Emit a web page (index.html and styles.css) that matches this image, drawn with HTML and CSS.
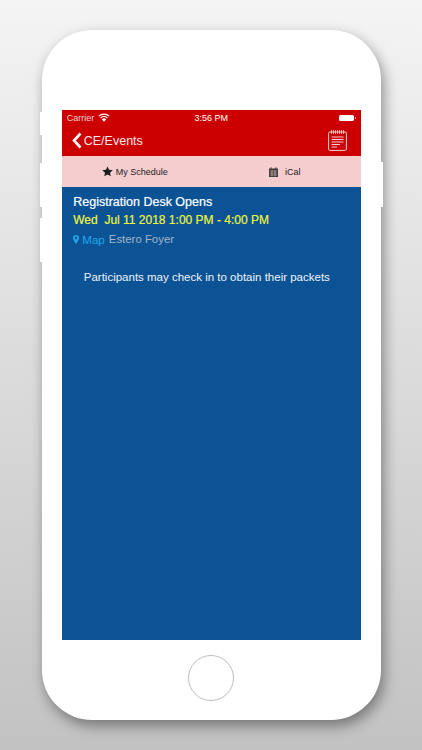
FILE: index.html

```html
<!DOCTYPE html>
<html lang="en">
<head>
    <meta charset="UTF-8">
    <meta name="viewport" content="width=device-width, initial-scale=1.0">
    <title>CE/Events</title>
    <link rel="stylesheet" href="styles.css">
</head>
<body>
    <div class="phone">
        <span class="side-btn mute"></span>
        <span class="side-btn vol-up"></span>
        <span class="side-btn vol-down"></span>
        <span class="side-btn power"></span>

        <div class="screen">
            <div class="header">
                <div class="status-bar">
                    <div class="carrier">
                        Carrier
                        <svg class="wifi" width="12" height="9" viewBox="0 0 12 9">
                            <path d="M6 8.8 L3.9 6.4 A3 3 0 0 1 8.1 6.4 Z" fill="#fff"/>
                            <path d="M2.7 5 A4.8 4.8 0 0 1 9.3 5" fill="none" stroke="#fff" stroke-width="1.2"/>
                            <path d="M0.8 3.1 A7.6 7.6 0 0 1 11.2 3.1" fill="none" stroke="#fff" stroke-width="1.2"/>
                        </svg>
                    </div>
                    <div class="clock">3:56 PM</div>
                    <div class="battery"><span class="battery-fill"></span><span class="battery-nub"></span></div>
                </div>
                <div class="nav-bar">
                    <div class="back">
                        <svg width="10" height="17" viewBox="0 0 10 17">
                            <path d="M8.5 1.5 L2 8.5 L8.5 15.5" fill="none" stroke="#fff" stroke-width="2.6"/>
                        </svg>
                        CE/Events
                    </div>
                    <svg class="notepad" width="19" height="22" viewBox="0 0 19 22">
                        <rect x="0.6" y="3" width="17.8" height="18.4" rx="1.2" fill="none" stroke="#f6cfcf" stroke-width="1"/>
                        <path d="M3.5 1V5M5.5 1V5M7.5 1V5M9.5 1V5M11.5 1V5M13.5 1V5M15.5 1V5" stroke="#f6cfcf" stroke-width="0.8"/>
                        <path d="M3.5 8H15.5M3.5 10.5H15.5M3.5 13H15.5M3.5 15.5H12M3.5 18H9" stroke="#f6cfcf" stroke-width="1"/>
                    </svg>
                </div>
            </div>

            <div class="toolbar">
                <div class="tool tool-schedule">
                    <svg width="11" height="11" viewBox="0 0 24 24"><path d="M12 1 L15.4 8.2 L23.4 9.2 L17.5 14.6 L19.1 22.5 L12 18.6 L4.9 22.5 L6.5 14.6 L0.6 9.2 L8.6 8.2 Z" fill="#1c1c1c"/></svg>
                    My Schedule
                </div>
                <div class="tool tool-ical">
                    <svg class="cal" width="9" height="10" viewBox="0 0 9 10">
                        <path d="M0 1.5H9V10H0Z" fill="#3a3a3a"/>
                        <path d="M2 0.3V2M7 0.3V2" stroke="#3a3a3a" stroke-width="1"/>
                        <path d="M0.8 4H8.2M0.8 6H8.2M0.8 8H8.2M3 3.4V9.4M6 3.4V9.4" stroke="#f5cdcf" stroke-width="0.5"/>
                    </svg>
                    iCal
                </div>
            </div>

            <div class="content">
                <div class="event-title">Registration Desk Opens</div>
                <div class="event-time">Wed&nbsp; Jul 11 2018 1:00 PM - 4:00 PM</div>
                <div class="event-place">
                    <svg width="6" height="9" viewBox="0 0 6 9">
                        <path fill-rule="evenodd" d="M3 0A3 3 0 0 1 6 3C6 4.8 4 7.4 3 9C2 7.4 0 4.8 0 3A3 3 0 0 1 3 0ZM3 1.8A1.2 1.2 0 1 0 3 4.2A1.2 1.2 0 1 0 3 1.8Z" fill="#1ea7ea"/>
                    </svg>
                    <span class="map-link">Map</span>
                    <span class="room">Estero Foyer</span>
                </div>
                <p class="event-desc">Participants may check in to obtain their packets</p>
            </div>
        </div>

        <div class="home-btn"></div>
    </div>
</body>
</html>
```

FILE: styles.css

```css
body { margin: 0; height: 750px; overflow: hidden; font-family: "Liberation Sans", Arial, sans-serif; background: linear-gradient(#f4f4f4, #c2c2c2); padding: 30px 41px 0 41.5px; box-sizing: border-box; }

/* Phone body */
.phone { position: relative; height: 690px; box-sizing: border-box; background: #fff; border-radius: 50px; box-shadow: 3px 6px 14px rgba(0, 0, 0, 0.4); padding-top: 80px; display: flex; flex-direction: column; align-items: center; }
.side-btn { position: absolute; width: 3px; background: #fff; }
.mute { left: -2px; top: 82px; height: 23px; }
.vol-up { left: -2px; top: 133px; height: 44px; }
.vol-down { left: -2px; top: 188px; height: 44px; }
.power { right: -2px; top: 132px; height: 45px; }

.screen { width: 299px; height: 530px; display: flex; flex-direction: column; }

/* Red header */
.header { background: #cc0000; color: #fff; height: 46px; }
.status-bar { display: flex; justify-content: space-between; align-items: center; height: 15px; padding: 0 5px; font-size: 9px; }
.carrier { flex: 1; display: flex; align-items: center; gap: 4px; color: #f3d0d0; }
.clock { font-size: 9px; }
.battery { flex: 1; display: flex; justify-content: flex-end; align-items: center; }
.battery-fill { width: 15px; height: 6px; background: #fff; border-radius: 1.5px; }
.battery-nub { width: 1px; height: 2px; margin-left: 1px; background: #f3a0a0; }
.nav-bar { display: flex; justify-content: space-between; align-items: center; height: 31px; padding: 0 14px 0 10px; }
.back { display: flex; align-items: center; gap: 2px; font-size: 12.5px; color: #f8e6e6; }
.notepad { margin-bottom: 2px; }

/* Pink toolbar */
.toolbar { background: #f5cdcf; height: 31px; display: flex; font-size: 9px; color: #222; }
.tool { flex: 1; display: flex; align-items: center; justify-content: center; gap: 3px; }
.tool-schedule { padding-right: 4px; }
.tool-ical { padding-right: 3px; }
.cal { margin-right: 4px; }

/* Event details */
.content { flex: 1; background: #0c5396; padding: 7px 11px 7px 11.5px; }
.event-title { font-size: 12.5px; color: #fff; line-height: 17px; -webkit-text-stroke: 0.2px #fff; }
.event-time { font-size: 12px; color: #eef33a; line-height: 17px; margin-top: 1px; -webkit-text-stroke: 0.2px #eef33a; }
.event-place { display: flex; align-items: center; font-size: 11.4px; line-height: 17px; margin-top: 2px; color: #a5b4c6; }
.map-link { color: #1ea7ea; font-size: 11.6px; margin: 0 4px 0 3px; }
.event-desc { margin: 21px 0 0 0; padding-left: 10.5px; font-size: 11.5px; line-height: 17px; color: #eef2f7; }

.home-btn { margin-top: 15px; width: 44px; height: 44px; border: 1px solid #bdbdbd; border-radius: 50%; }
```
